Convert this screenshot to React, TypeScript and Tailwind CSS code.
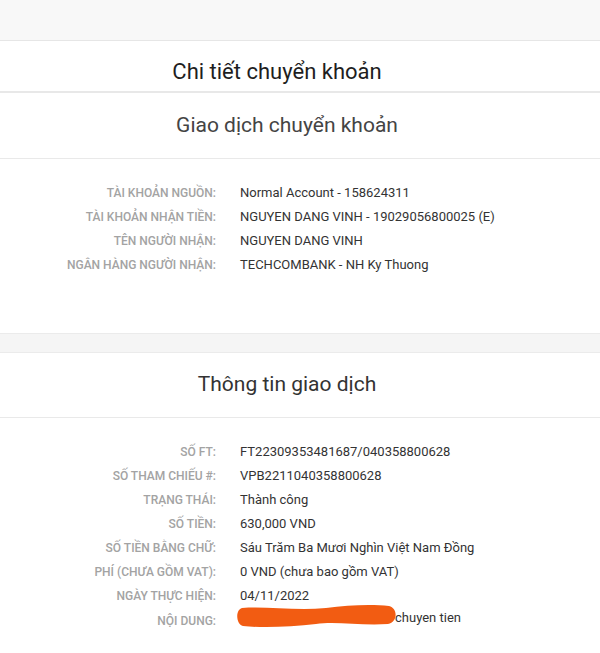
import React from "react"

const transfer = [
  { label: "Tài khoản nguồn:", value: "Normal Account - 158624311" },
  { label: "Tài khoản nhận tiền:", value: "NGUYEN DANG VINH - 19029056800025 (E)" },
  { label: "Tên người nhận:", value: "NGUYEN DANG VINH" },
  { label: "Ngân hàng người nhận:", value: "TECHCOMBANK - NH Ky Thuong" },
]

const info = [
  { label: "Số FT:", value: "FT22309353481687/040358800628" },
  { label: "Số tham chiếu #:", value: "VPB2211040358800628" },
  { label: "Trạng thái:", value: "Thành công" },
  { label: "Số tiền:", value: "630,000 VND" },
  { label: "Số tiền bằng chữ:", value: "Sáu Trăm Ba Mươi Nghìn Việt Nam Đồng" },
  { label: "Phí (chưa gồm VAT):", value: "0 VND (chưa bao gồm VAT)" },
  { label: "Ngày thực hiện:", value: "04/11/2022" },
]

function Row({ label, children }: { label: string; children: React.ReactNode }) {
  return (
    <div className="grid grid-cols-[216px_1fr] gap-x-6 items-center h-6">
      <div className="text-right text-[12px] font-medium uppercase text-[#a3a3a3]">{label}</div>
      <div className="text-[13px] text-[#333]">{children}</div>
    </div>
  )
}

// the redaction mark over the content text
function Scribble() {
  return (
    <svg width="162" height="26" viewBox="0 0 162 26" className="absolute -left-[4px] -top-[5px]">
      <path
        d="M6 5 C30 3 60 8 90 5 C112 2 136 1 153 3 C162 5 162 19 152 21 C126 23 100 18 80 21 C55 24 25 25 7 23 C0 21 -1 7 6 5 Z"
        fill="#f25c12"
      />
    </svg>
  )
}

export default function App() {
  return (
    <div className="w-[600px] h-[653px] bg-white overflow-hidden font-['Roboto',sans-serif]">
      <div className="h-[41px] bg-[#f8f8f8] border-b border-[#e6e6e6]" />
      <div className="h-[52px] flex items-center justify-center pt-[10px] pr-[46px] border-b-2 border-[#e8e8e8]">
        <h1 className="text-[22px] text-[#1e1e1e]">Chi tiết chuyển khoản</h1>
      </div>

      <section>
        <div className="h-[66px] flex items-center justify-center pr-[26px] border-b border-[#e9e9e9]">
          <h2 className="text-[21px] text-[#444]">Giao dịch chuyển khoản</h2>
        </div>
        <div className="pt-[22px] pb-[56px]">
          {transfer.map((r) => (
            <Row key={r.label} label={r.label}>
              {r.value}
            </Row>
          ))}
        </div>
      </section>

      <div className="h-[20px] bg-[#f5f5f5] border-y border-[#ebebeb]" />

      <section>
        <div className="h-[65px] flex items-center justify-center pr-[26px] border-b border-[#e9e9e9]">
          <h2 className="text-[21px] text-[#333]">Thông tin giao dịch</h2>
        </div>
        <div className="pt-[22px]">
          {info.map((r) => (
            <Row key={r.label} label={r.label}>
              {r.value}
            </Row>
          ))}
          <Row label="Nội dung:">
            <span className="relative inline-flex">
              <span className="inline-block w-[155px]" />
              <Scribble />
              <span>chuyen tien</span>
            </span>
          </Row>
        </div>
      </section>
    </div>
  )
}
